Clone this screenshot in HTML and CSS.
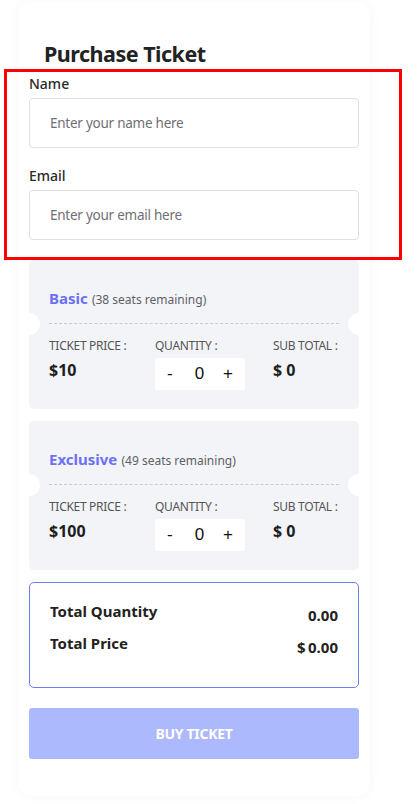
FILE: index.html
```html
<!DOCTYPE html>
<html>
<head>
<meta charset="utf-8">
<link rel="stylesheet" href="styles.css">
</head>
<body>
<div class="card">
  <h1 class="title">Purchase Ticket</h1>
  <div class="field">
    <label class="label">Name</label>
    <input class="input" type="text" placeholder="Enter your name here">
  </div>
  <div class="field">
    <label class="label">Email</label>
    <input class="input" type="text" placeholder="Enter your email here">
  </div>

  <div class="ticket">
    <div class="ticket-head"><span class="tname">Basic</span> <span class="seats">(38 seats remaining)</span></div>
    <div class="divider"><span class="notch left"></span><span class="notch right"></span></div>
    <div class="ticket-row">
      <div class="col c1"><div class="clabel">TICKET PRICE :</div><div class="cval">$10</div></div>
      <div class="col c2"><div class="clabel">QUANTITY :</div>
        <div class="qty"><span class="qbtn">-</span><span class="qnum">0</span><span class="qbtn">+</span></div></div>
      <div class="col c3"><div class="clabel">SUB TOTAL :</div><div class="cval">$ 0</div></div>
    </div>
  </div>

  <div class="ticket">
    <div class="ticket-head"><span class="tname">Exclusive</span> <span class="seats">(49 seats remaining)</span></div>
    <div class="divider"><span class="notch left"></span><span class="notch right"></span></div>
    <div class="ticket-row">
      <div class="col c1"><div class="clabel">TICKET PRICE :</div><div class="cval">$100</div></div>
      <div class="col c2"><div class="clabel">QUANTITY :</div>
        <div class="qty"><span class="qbtn">-</span><span class="qnum">0</span><span class="qbtn">+</span></div></div>
      <div class="col c3"><div class="clabel">SUB TOTAL :</div><div class="cval">$ 0</div></div>
    </div>
  </div>

  <div class="summary">
    <div class="srow"><span class="sk">Total Quantity</span><span class="sv">0.00</span></div>
    <div class="srow"><span class="sk">Total Price</span><span class="sv">$&#8201;0.00</span></div>
  </div>

  <button class="buy">BUY TICKET</button>
</div>
<div class="highlight"></div>
</body>
</html>
```
FILE: styles.css
```css
* { box-sizing: border-box; }
html, body { margin: 0; padding: 0; background: #fff; }
body { font-family: "Noto Sans", "Open Sans", sans-serif; color: #222; position: relative; height: 804px; overflow: hidden; }

.card {
  margin: 2px 0 0 18px;
  width: 352px;
  height: 794px;
  background: #fff;
  border-radius: 14px;
  box-shadow: 0 0 14px rgba(0,0,0,0.035);
  padding: 37px 11px 0;
}

.title {
  margin: 0 0 5px 15px;
  font-size: 21.5px;
  line-height: 30px;
  font-weight: 700;
  letter-spacing: -0.5px;
  color: #222;
}

.field { display: flex; flex-direction: column; }
.field + .field { margin-top: 18px; }
.label { font-size: 14px; line-height: 20px; font-weight: 500; color: #2a2a2a; margin-bottom: 4px; }
.input {
  height: 50px;
  border: 1px solid #dfdfe2;
  border-radius: 4px;
  padding: 0 20px;
  font-family: "Noto Sans", sans-serif;
  font-size: 13.5px;
  letter-spacing: -0.25px;
  color: #333;
  outline: none;
  background: #fff;
}
.input::placeholder { color: #6f6f74; }

.ticket {
  margin-top: 20px;
  background: #f3f4f8;
  border-radius: 5px;
  padding: 28px 20px 20px;
  height: 149px;
}
.ticket + .ticket { margin-top: 12px; }
.ticket-head { line-height: 20px; }
.tname { font-size: 15px; font-weight: 700; color: #6c70f2; }
.seats { font-size: 12px; color: #5f5f66; }

.divider {
  position: relative;
  margin-top: 13px;
  border-top: 1px dashed #c9c9cf;
  height: 0;
}
.notch {
  position: absolute;
  top: -11px;
  width: 22px;
  height: 22px;
  border-radius: 50%;
  background: #fff;
}
.notch.left { left: -31px; }
.notch.right { right: -31px; }

.ticket-row { display: flex; margin-top: 14px; }
.col { display: flex; flex-direction: column; }
.c1 { width: 106px; }
.c2 { width: 118px; }
.clabel { font-size: 12px; line-height: 16px; color: #555; letter-spacing: -0.3px; }
.cval { font-size: 16px; font-weight: 700; line-height: 20px; margin-top: 6px; color: #1e1e1e; }

.qty {
  margin-top: 4px;
  width: 90px;
  height: 32px;
  background: #fff;
  border-radius: 3px;
  display: flex;
  align-items: center;
  justify-content: space-between;
  padding: 0 12px;
  font-family: "Liberation Sans", Arial, sans-serif;
  font-size: 17px;
  color: #111;
}
.qnum { margin-left: 3px; }

.summary {
  margin-top: 12px;
  border: 1px solid #6a7ff0;
  border-radius: 5px;
  height: 106px;
  padding: 18px 20px 0 20px;
}
.srow { display: flex; justify-content: space-between; align-items: flex-end; height: 24px; }
.srow + .srow { margin-top: 8px; }
.sk { font-size: 15px; font-weight: 700; color: #222; align-self: flex-start; }
.sv { font-size: 15px; font-weight: 700; color: #222; }

.buy {
  display: block;
  width: 100%;
  margin-top: 20px;
  height: 51px;
  border: none;
  border-radius: 3px;
  background: #adb9fd;
  color: #fff;
  font-family: "Noto Sans", sans-serif;
  font-size: 14px;
  font-weight: 700;
  letter-spacing: -0.3px;
}

.highlight {
  position: absolute;
  left: 4px;
  top: 69px;
  width: 398px;
  height: 191px;
  border: 3px solid #ff0000;
  pointer-events: none;
}
```
